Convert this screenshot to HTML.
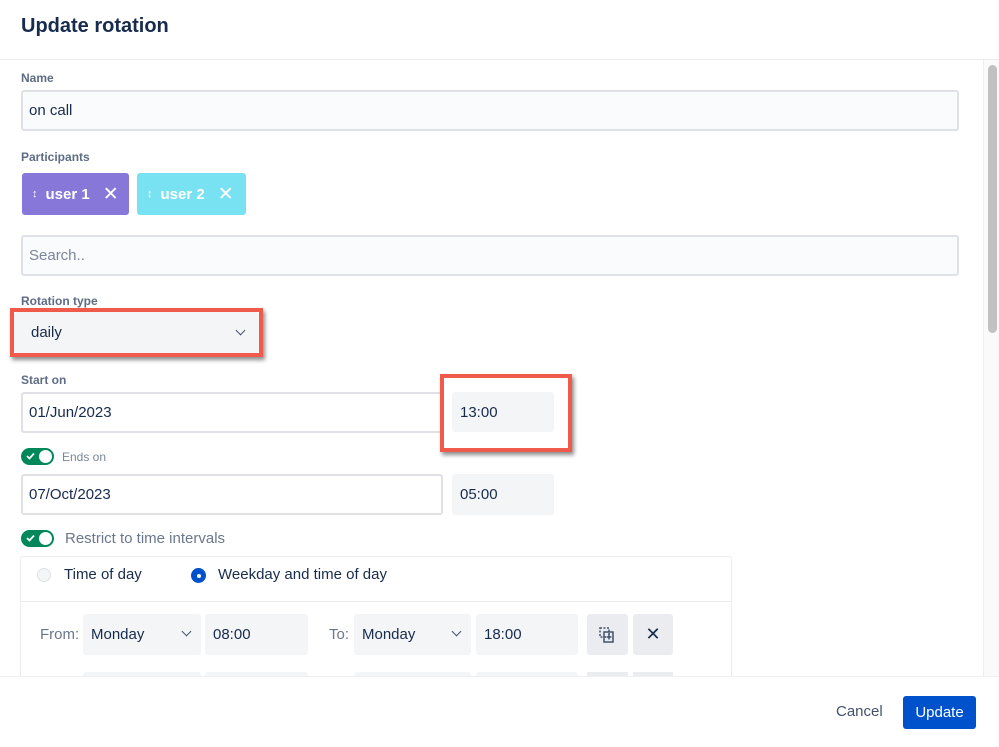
<!DOCTYPE html>
<html><head><meta charset="utf-8"><style>
*{box-sizing:border-box;margin:0;padding:0}
body{width:999px;height:747px;overflow:hidden;background:#fff;font-family:"Liberation Sans",sans-serif;color:#172b4d;position:relative}
.a{position:absolute}
.lbl{font-size:12px;font-weight:bold;color:#5e6c84}
.inp{position:absolute;border:2px solid #dfe1e6;background:#fafbfc;border-radius:3px;font-size:15px;padding-left:6px;display:flex;align-items:center}
.gray{position:absolute;background:#f4f5f7;border-radius:3px;font-size:15px;padding-left:8px;display:flex;align-items:center}
.red{position:absolute;border:4px solid #f05a4a;box-shadow:2px 3px 4px rgba(0,0,0,.45)}
.chev{position:absolute;width:7px;height:7px;border-right:1.5px solid #42526e;border-bottom:1.5px solid #42526e;transform:rotate(45deg)}
.tog{position:absolute;width:33px;height:17px;border-radius:9px;background:#00875a}
.tog::after{content:"";position:absolute;right:2px;top:2px;width:13px;height:13px;border-radius:50%;background:#fff}
.tog svg{position:absolute;left:5px;top:4px}
</style></head><body>
<div class="a" style="left:21px;top:15px;font-size:20px;font-weight:bold;color:#172b4d">Update rotation</div>
<div class="a" style="left:0;top:59px;width:999px;height:1px;background:#ebecf0"></div>
<div class="a" style="left:983px;top:60px;width:16px;height:617px;background:#fafafa;border-left:1px solid #eee"></div>
<div class="a" style="left:988px;top:65px;width:9px;height:268px;background:#c1c1c1;border-radius:5px"></div>

<div class="a lbl" style="left:21px;top:71px">Name</div>
<div class="inp" style="left:21px;top:90px;width:938px;height:41px">on call</div>
<div class="a lbl" style="left:21px;top:150px">Participants</div>
<div class="a" style="left:22px;top:173px;width:107px;height:42px;background:#8777d9;border-radius:3px;color:#fff;font-size:15px;font-weight:bold;display:flex;align-items:center;padding-left:10px"><span style="font-size:11px;margin-right:8px">↕</span>user 1<span style="font-size:19px;font-weight:normal;margin-left:13px">✕</span></div>
<div class="a" style="left:137px;top:173px;width:109px;height:42px;background:#79e2f2;border-radius:3px;color:#fff;font-size:15px;font-weight:bold;display:flex;align-items:center;padding-left:10px"><span style="font-size:11px;margin-right:8px">↕</span>user 2<span style="font-size:19px;font-weight:normal;margin-left:13px">✕</span></div>
<div class="inp" style="left:21px;top:235px;width:938px;height:41px;color:#7a869a">Search..</div>

<div class="a lbl" style="left:21px;top:294px">Rotation type</div>
<div class="gray" style="left:14px;top:312px;width:245px;height:41px;padding-left:17px">daily</div>
<div class="chev" style="left:237px;top:327px"></div>
<div class="red" style="left:10px;top:308px;width:253px;height:49px"></div>

<div class="a lbl" style="left:21px;top:373px">Start on</div>
<div class="inp" style="left:21px;top:392px;width:430px;height:41px;background:#fff">01/Jun/2023</div>
<div class="a" style="left:444px;top:378px;width:124px;height:70px;background:#fff"></div>
<div class="gray" style="left:452px;top:392px;width:102px;height:40px">13:00</div>
<div class="red" style="left:440px;top:374px;width:132px;height:78px"></div>

<div class="tog" style="left:21px;top:448px"><svg width="9" height="8" viewBox="0 0 9 8"><path d="M1 4l2.5 2.5L8 1.5" stroke="#fff" stroke-width="1.8" fill="none"/></svg></div>
<div class="a" style="left:62px;top:450px;font-size:12px;color:#7a869a">Ends on</div>
<div class="inp" style="left:21px;top:474px;width:422px;height:41px;background:#fff">07/Oct/2023</div>
<div class="gray" style="left:452px;top:474px;width:102px;height:41px">05:00</div>

<div class="tog" style="left:21px;top:530px"><svg width="9" height="8" viewBox="0 0 9 8"><path d="M1 4l2.5 2.5L8 1.5" stroke="#fff" stroke-width="1.8" fill="none"/></svg></div>
<div class="a" style="left:65px;top:530px;font-size:15px;color:#6b778c">Restrict to time intervals</div>

<div class="a" style="left:20px;top:556px;width:712px;height:140px;border:1px solid #ebecf0;border-radius:3px"></div>
<div class="a" style="left:37px;top:568px;width:14px;height:14px;border-radius:50%;border:1.5px solid #dfe1e6;background:#f4f5f7"></div>
<div class="a" style="left:64px;top:566px;font-size:15px">Time of day</div>
<div class="a" style="left:191px;top:568px;width:15px;height:15px;border-radius:50%;background:#0052cc"></div>
<div class="a" style="left:196.5px;top:573.5px;width:4px;height:4px;border-radius:50%;background:#fff"></div>
<div class="a" style="left:218px;top:566px;font-size:15px">Weekday and time of day</div>
<div class="a" style="left:21px;top:601px;width:710px;height:1px;background:#ebecf0"></div>

<div class="a" style="left:40px;top:626px;font-size:15px;color:#6b778c">From:</div>
<div class="gray" style="left:83px;top:614px;width:118px;height:41px">Monday</div>
<div class="chev" style="left:183px;top:628px"></div>
<div class="gray" style="left:205px;top:614px;width:103px;height:41px">08:00</div>
<div class="a" style="left:329px;top:626px;font-size:15px;color:#6b778c">To:</div>
<div class="gray" style="left:354px;top:614px;width:117px;height:41px">Monday</div>
<div class="chev" style="left:453px;top:628px"></div>
<div class="gray" style="left:476px;top:614px;width:102px;height:41px">18:00</div>
<div class="a" style="left:587px;top:614px;width:41px;height:41px;background:#ebecf0;border-radius:3px"></div>
<svg class="a" style="left:598px;top:626px" width="18" height="18" viewBox="0 0 18 18" fill="none" stroke="#42526e" stroke-width="1.5"><rect x="2" y="2" width="9" height="9" stroke-dasharray="2 1.5"/><rect x="6" y="6" width="9" height="10"/><path d="M8.5 11h5M11 8.5v5"/></svg>
<div class="a" style="left:633px;top:614px;width:40px;height:41px;background:#ebecf0;border-radius:3px;font-size:18px;text-align:center;line-height:41px">✕</div>
<div class="gray" style="left:83px;top:672px;width:118px;height:10px"></div>
<div class="gray" style="left:205px;top:672px;width:103px;height:10px"></div>
<div class="gray" style="left:354px;top:672px;width:117px;height:10px"></div>
<div class="gray" style="left:476px;top:672px;width:102px;height:10px"></div>
<div class="a" style="left:587px;top:672px;width:41px;height:10px;background:#ebecf0"></div>
<div class="a" style="left:633px;top:672px;width:40px;height:10px;background:#ebecf0"></div>

<div class="a" style="left:0;top:676px;width:999px;height:71px;background:#fff;border-top:1px solid #f0f0f0"></div>
<div class="a" style="left:836px;top:703px;font-size:15px;color:#42526e">Cancel</div>
<div class="a" style="left:903px;top:696px;width:73px;height:33px;background:#0052cc;border-radius:3px;color:#fff;font-size:15px;text-align:center;line-height:33px">Update</div>
</body></html>
